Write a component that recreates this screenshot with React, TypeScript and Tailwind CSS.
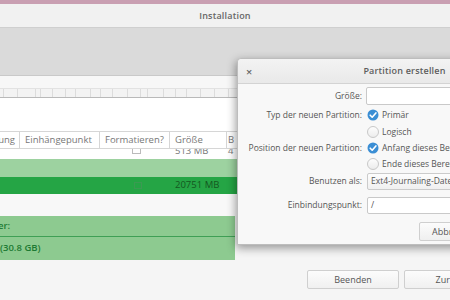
import React from "react";

function CheckedRadio() {
  return (
    <svg width="12" height="12" viewBox="0 0 12 12" className="shrink-0">
      <circle cx="6" cy="6" r="5.5" fill="#3b8ed4" />
      <path d="M3.2 6.2 L5.2 8.2 L8.9 3.9" stroke="#fff" strokeWidth="1.6" fill="none" strokeLinecap="round" strokeLinejoin="round" />
    </svg>
  );
}

function EmptyRadio() {
  return <div className="w-[12px] h-[12px] rounded-full border border-[#c8c8c8] bg-gradient-to-b from-[#fdfdfd] to-[#ececec] shrink-0" />;
}

export default function App() {
  const ticks = [3, 17, 35, 40, 52, 65, 75, 90, 100, 112, 127, 140, 147, 163, 175, 186, 200, 214, 228, 240, 255, 270, 290, 305, 320, 340, 360, 380, 400, 420, 440];
  return (
    <div className="relative w-[450px] h-[300px] overflow-hidden bg-[#f5f5f5] font-['Open_Sans',sans-serif] text-[#5a5a5a]">
      {/* main window */}
      <div className="flex flex-col w-[450px] h-[300px]">
        <div className="h-[4px] bg-[#c99fb2]" />
        <div className="h-[24px] bg-[#f1f1f1] border-b border-[#cfcfcf] flex items-center justify-center text-[9px] font-semibold text-[#666] tracking-[0.2px]">
          Installation
        </div>
        <div className="h-[48px] bg-[#dadada] border-b border-[#c9c9c9]" />
        <div className="h-[12px] bg-[#f7f7f7]" />
        <div className="relative h-[10px] bg-[#f3f3f3] border-b border-[#b9b9b9] border-t border-t-[#e2e2e2]">
          {ticks.map((t) => (
            <div key={t} className="absolute top-0 bottom-0 w-px bg-[#dcdcdc]" style={{ left: t }} />
          ))}
        </div>
        <div className="h-[33px] bg-white" />
        {/* table header */}
        <div className="h-[18px] bg-white border-t border-b border-[#d6d6d6] flex items-center text-[9.5px] text-[#777] relative">
          <div className="w-[20px] h-full flex items-center justify-end pr-[4px] border-r border-[#d6d6d6]">ung</div>
          <div className="w-[80px] h-full flex items-center pl-[5px] border-r border-[#d6d6d6]">Einhängepunkt</div>
          <div className="w-[70px] h-full flex items-center pl-[5px] border-r border-[#d6d6d6]">Formatieren?</div>
          <div className="w-[57px] h-full flex items-center pl-[5px] border-r border-[#d6d6d6]">Größe</div>
          <div className="flex-1 h-full flex items-center pl-[1px]">B</div>
        </div>
        {/* partially visible white row */}
        <div className="relative h-[10px] bg-white overflow-hidden text-[9.5px] text-[#777] leading-[10px]">
          <div className="absolute left-[132px] top-0 w-[9px] h-[5px] border border-t-0 border-[#bbb]" />
          <div className="absolute left-[175px] top-[-3px]">513 MB</div>
          <div className="absolute left-[228px] top-[-3px]">4</div>
        </div>
        <div className="h-[18px] bg-[#9dd2a0]" />
        <div className="h-[17px] bg-[#25a545] flex items-center text-[9.5px] text-[#14571f]">
          <div className="w-[134px]" />
          <div className="w-[8px] h-[7px] border border-[#3b9a52]" />
          <div className="w-[33px]" />
          <div>20751 MB</div>
        </div>
        <div className="h-[22px] bg-[#f8f8f8]" />
        <div className="w-[235px] h-[44px] bg-[#8dca90] flex flex-col text-[9.5px] font-semibold text-[#1d7a33]">
          <div className="h-[21px] flex items-center border-b border-[#3f9f55] -ml-[2px]">er:</div>
          <div className="h-[23px] flex items-center">(30.8 GB)</div>
        </div>
        <div className="flex-1 bg-[#f5f5f5] flex items-start pt-[10px] pl-[307px] gap-[5px]">
          <button className="w-[92px] h-[19px] shrink-0 border border-[#cfcfcf] rounded-[2px] bg-gradient-to-b from-[#fcfcfc] to-[#f0f0f0] text-[9px] text-[#555]">
            Beenden
          </button>
          <button className="w-[92px] h-[19px] shrink-0 border border-[#cfcfcf] rounded-[2px] bg-gradient-to-b from-[#fcfcfc] to-[#f0f0f0] text-[9px] text-[#555]">
            Zurück
          </button>
        </div>
      </div>

      {/* dialog */}
      <div className="absolute left-[237px] top-[58px] w-[335px] h-[187px] bg-[#f8f8f8] rounded-t-[4px] border border-[#bdbdbd] shadow-[-1px_3px_10px_rgba(0,0,0,0.4)] flex flex-col">
        <div className="h-[25px] shrink-0 bg-gradient-to-b from-[#f3f3f3] to-[#e9e9e9] border-b border-[#d3d3d3] rounded-t-[4px] relative flex items-center justify-center">
          <span className="absolute left-[8px] top-[5px] text-[11px] text-[#666] font-semibold">×</span>
          <span className="text-[9px] font-semibold text-[#5d5d5d] tracking-[0.2px]">Partition erstellen</span>
        </div>
        <div className="flex flex-col pt-[3px] text-[8.5px] text-[#555]">
          <div className="flex items-center h-[18px]">
            <div className="w-[124px] text-right">Größe:</div>
            <div className="ml-[4px] w-[150px] h-[18px] bg-white border border-[#c9c9c9] rounded-[2px]" />
          </div>
          <div className="flex items-center h-[16px] mt-[2px]">
            <div className="w-[124px] text-right">Typ der neuen Partition:</div>
            <div className="ml-[5px] flex items-center gap-[3px]"><CheckedRadio /><span>Primär</span></div>
          </div>
          <div className="flex items-center h-[16px] mt-[1px]">
            <div className="w-[124px]" />
            <div className="ml-[5px] flex items-center gap-[3px]"><EmptyRadio /><span>Logisch</span></div>
          </div>
          <div className="flex items-center h-[16px]">
            <div className="w-[124px] text-right whitespace-nowrap">Position der neuen Partition:</div>
            <div className="ml-[5px] flex items-center gap-[3px] whitespace-nowrap"><CheckedRadio /><span>Anfang dieses Bereichs</span></div>
          </div>
          <div className="flex items-center h-[16px]">
            <div className="w-[124px]" />
            <div className="ml-[5px] flex items-center gap-[3px] whitespace-nowrap"><EmptyRadio /><span>Ende dieses Bereichs</span></div>
          </div>
          <div className="flex items-center h-[17px] mt-[1px]">
            <div className="w-[124px] text-right">Benutzen als:</div>
            <div className="ml-[5px] w-[150px] h-[17px] bg-gradient-to-b from-[#fdfdfd] to-[#f0f0f0] border border-[#cbcbcb] rounded-[2px] flex items-center pl-[3px] whitespace-nowrap">
              Ext4-Journaling-Dateisystem
            </div>
          </div>
          <div className="flex items-center h-[17px] mt-[7px]">
            <div className="w-[124px] text-right">Einbindungspunkt:</div>
            <div className="ml-[5px] w-[150px] h-[17px] bg-white border border-[#c9c9c9] rounded-[2px] flex items-center pl-[3px]">/</div>
          </div>
          <div className="flex h-[19px] mt-[8px] pl-[181px]">
            <button className="w-[80px] h-[19px] shrink-0 border border-[#cfcfcf] rounded-[2px] bg-gradient-to-b from-[#fcfcfc] to-[#efefef] text-[9px] text-[#555] text-left pl-[12px]">
              Abbrechen
            </button>
          </div>
        </div>
      </div>
    </div>
  );
}
